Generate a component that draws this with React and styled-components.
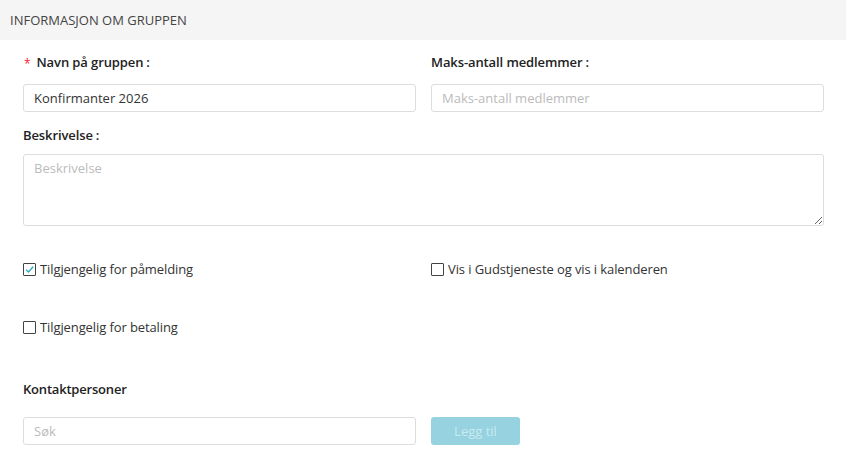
import React, { useState } from 'react';
import styled, { createGlobalStyle } from 'styled-components';

const GlobalStyle = createGlobalStyle`
  body {
    margin: 0;
    background: #fff;
    font-family: "Open Sans", "Noto Sans", sans-serif;
    font-size: 13px;
    color: #333;
  }
  * { box-sizing: border-box; }
`;

const Header = styled.div`
  height: 40px;
  background: #f5f5f5;
  display: flex;
  align-items: center;
  padding: 0 10px;
  text-transform: uppercase;
  color: #444;
  font-size: 13px;
`;

const Body = styled.div`
  padding: 13px 22px 0 23px;
`;

const Row = styled.div`
  display: grid;
  grid-template-columns: 1fr 1fr;
  column-gap: 15px;
  margin-top: ${p => p.$top || 0}px;
`;

const Label = styled.label`
  display: block;
  height: 18px;
  font-weight: 600;
  color: #222;
  line-height: 18px;
  letter-spacing: -0.1px;
  margin-bottom: ${p => p.$gap || 13}px;
`;

const Required = styled.span`
  display: inline-block;
  color: #f5222d;
  font-weight: 400;
  font-size: 12px;
  line-height: 1;
  margin-right: 6px;
  margin-left: 1px;
  vertical-align: -1px;
`;

const Colon = styled.span`
  margin-left: 3px;
`;

const Input = styled.input`
  width: 100%;
  height: 28px;
  border: 1px solid #ddd;
  border-radius: 3px;
  padding: 0 10px;
  font: inherit;
  color: #333;
  outline: none;
  &::placeholder { color: #bbb; }
`;

const TextArea = styled.textarea`
  display: block;
  width: 100%;
  height: 72px;
  border: 1px solid #ddd;
  border-radius: 3px;
  padding: 4px 10px;
  font: inherit;
  color: #333;
  outline: none;
  resize: vertical;
  &::placeholder { color: #bbb; }
`;

const CheckRow = styled.label`
  display: flex;
  align-items: center;
  gap: 4px;
  line-height: 18px;
  color: #333;
  letter-spacing: -0.1px;
  cursor: pointer;
`;

const Box = styled.span`
  width: 13px;
  height: 13px;
  border: 1px solid #444;
  border-radius: 1px;
  display: flex;
  align-items: center;
  justify-content: center;
  background: #fff;
`;

const SectionTitle = styled.div`
  font-weight: 600;
  color: #222;
  line-height: 18px;
  letter-spacing: -0.2px;
`;

const Button = styled.button`
  width: 89px;
  height: 28px;
  border: none;
  border-radius: 3px;
  background: #96d2df;
  color: #c9eaf1;
  font: inherit;
  cursor: not-allowed;
`;

const Check = ({ label, checked, onToggle }) => (
  <CheckRow onClick={onToggle}>
    <Box>
      {checked && (
        <svg width="11" height="11" viewBox="0 0 11 11">
          <path d="M2 5.6 L4.4 8 L9.2 2.8" fill="none" stroke="#2aa5c9" strokeWidth="1.3" />
        </svg>
      )}
    </Box>
    {label}
  </CheckRow>
);

export default function App() {
  const [opts, setOpts] = useState({ signup: true, service: false, payment: false });
  const toggle = key => () => setOpts(o => ({ ...o, [key]: !o[key] }));

  return (
    <>
      <GlobalStyle />
      <Header>Informasjon om gruppen</Header>
      <Body>
        <Row>
          <div>
            <Label><Required>*</Required>Navn på gruppen<Colon>:</Colon></Label>
            <Input defaultValue="Konfirmanter 2026" />
          </div>
          <div>
            <Label>Maks-antall medlemmer<Colon>:</Colon></Label>
            <Input placeholder="Maks-antall medlemmer" />
          </div>
        </Row>
        <div style={{ marginTop: 14 }}>
          <Label $gap={10}>Beskrivelse<Colon>:</Colon></Label>
          <TextArea placeholder="Beskrivelse" />
        </div>
        <Row $top={34}>
          <Check label="Tilgjengelig for påmelding" checked={opts.signup} onToggle={toggle('signup')} />
          <Check label="Vis i Gudstjeneste og vis i kalenderen" checked={opts.service} onToggle={toggle('service')} />
        </Row>
        <Row $top={40}>
          <Check label="Tilgjengelig for betaling" checked={opts.payment} onToggle={toggle('payment')} />
        </Row>
        <Row $top={44}>
          <SectionTitle>Kontaktpersoner</SectionTitle>
        </Row>
        <Row $top={19}>
          <Input placeholder="Søk" />
          <div><Button disabled>Legg til</Button></div>
        </Row>
      </Body>
    </>
  );
}
